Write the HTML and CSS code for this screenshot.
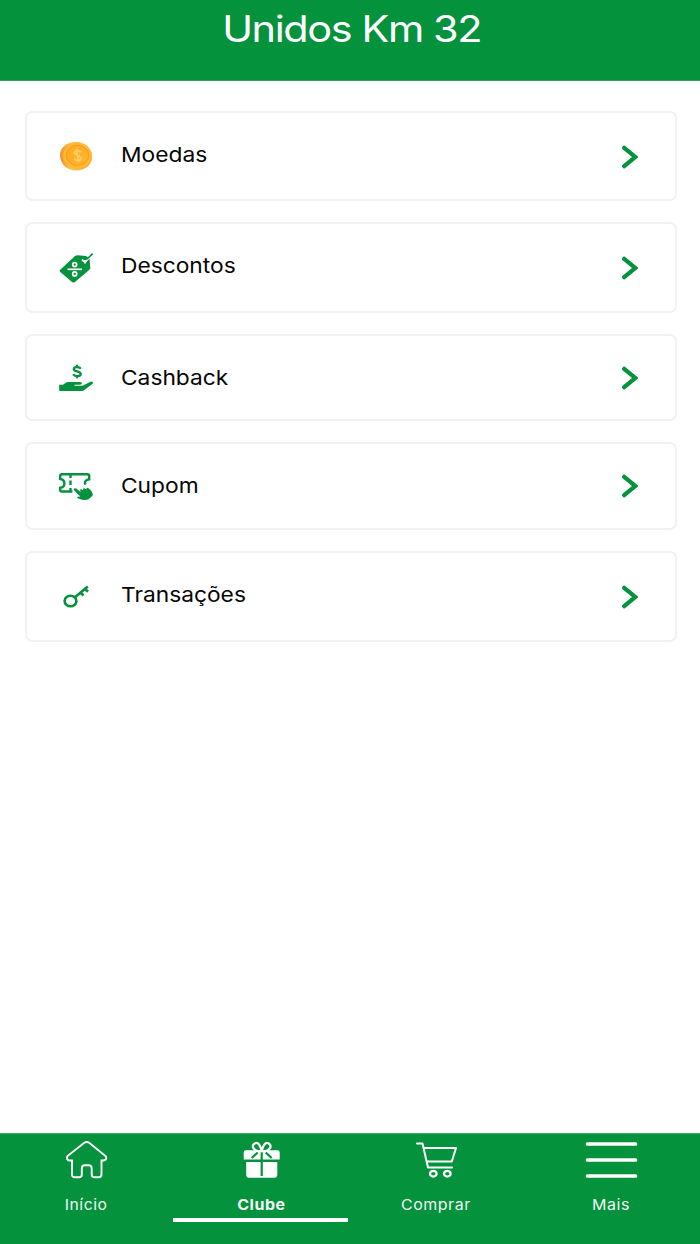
FILE: index.html
```html
<!DOCTYPE html>
<html lang="pt-BR">
<head>
<meta charset="utf-8">
<title>Unidos Km 32</title>
<link rel="stylesheet" href="styles.css">
</head>
<body>
<div class="app">
  <header class="header"><h1 class="title">Unidos Km 32</h1></header>
  <main class="list">
    <a class="card card-moedas">
      <svg class="icon" viewBox="55 137 42 40">
        <defs>
          <linearGradient id="edge" x1="0" x2="1"><stop offset="0" stop-color="#f0902c"/><stop offset=".35" stop-color="#ffc247"/><stop offset="1" stop-color="#fba62b"/></linearGradient>
          <linearGradient id="face" x1="0" x2="1" y1="0" y2="1"><stop offset="0" stop-color="#ffab22"/><stop offset="1" stop-color="#ffb52e"/></linearGradient>
        </defs>
        <path d="M60 155C60 148 66 142 76 142C85 142 92 149 92 157C92 165 85 170.500 76 170.500C67 170.500 60 164 60 155Z" fill="url(#edge)"/>
        <ellipse cx="77.500" cy="155.500" rx="14.300" ry="12.800" fill="#ffb932"/>
        <ellipse cx="77.500" cy="155.300" rx="11.300" ry="10" fill="url(#face)" stroke="#f89a1d" stroke-width="1"/>
        <path d="M80.800 152.300C79.500 150.500 74.500 150 74.500 152.700C74.500 155.800 81 154.700 81 158.200C81 161 76 161 74.300 158.700M76.500 148.600L78.700 162" fill="none" stroke="#ffcb64" stroke-width="1.800"/>
      </svg>
      <span class="label">Moedas</span>
      <svg class="chevron" viewBox="0 0 16 24"><path d="M2.200 2.800L13.200 12L2.200 21.200"/></svg>
    </a>
    <a class="card card-descontos">
      <svg class="icon" viewBox="55 248 42 40">
        <path d="M60 270L75 256Q76 255.300 77.500 255.300L86 256L89.500 258.500L90.300 267.500Q90.300 269 89.400 269.800L75 282Q73.500 283 72 282L60 271.800Q59 270.800 60 270Z" fill="#04923c"/>
        <path d="M82 259.800L85 262.300L92 254.500M85 263.500V260" fill="none" stroke="#fff" stroke-width="1.800"/>
        <path d="M86.500 259.500L92.700 253.700" stroke="#04923c" stroke-width="1.700"/>
        <g fill="none" stroke="#fff" stroke-width="1.700"><circle cx="74.700" cy="264.600" r="2"/><circle cx="74.700" cy="273.900" r="2"/><path d="M67.500 269.300H82"/></g>
      </svg>
      <span class="label">Descontos</span>
      <svg class="chevron" viewBox="0 0 16 24"><path d="M2.200 2.800L13.200 12L2.200 21.200"/></svg>
    </a>
    <a class="card card-cashback">
      <svg class="icon" viewBox="55 358 42 40">
        <path d="M80.800 368.800C79.500 366.500 73.800 366.500 73.800 369.200C73.800 372 80.700 370.800 80.700 374C80.700 377 74.500 376.700 73.200 374.300M77 364.800V367.500M77 375.500V378.300" fill="none" stroke="#04923c" stroke-width="2.300"/>
        <path d="M59.200 384.700H63L66.500 382.300Q67.300 381.900 68.500 381.900H80Q81.800 381.900 81.800 383.300Q81.800 384.500 80 384.700H74.500V385.800H81.500Q83 385.800 84.500 384.800L90 381.900Q92 381 92.900 382.200Q93.400 383.200 92 384.300L84.700 389.800Q83.300 391 81.300 391H60Q59.200 391 59.200 390.200Z" fill="#04923c"/>
      </svg>
      <span class="label">Cashback</span>
      <svg class="chevron" viewBox="0 0 16 24"><path d="M2.200 2.800L13.200 12L2.200 21.200"/></svg>
    </a>
    <a class="card card-cupom">
      <svg class="icon" viewBox="55 466 42 40">
        <g fill="none" stroke="#04923c" stroke-width="2.400">
          <path d="M85.800 484.500C83.800 482.500 85.500 480 89.200 479.300V475.800Q89.200 474.200 87.200 474.200H62Q60.200 474.200 60.200 475.800V479C65.800 479.800 65.800 487 60.200 487.700V490Q60.200 491.500 62 491.500H72.500"/>
          <path d="M70.500 474.500V478M70.500 480.500V485M70.500 488V491.500"/>
        </g>
        <path d="M73.900 488.700Q75 487.700 76.200 488.500L80.700 491.900L80 489.800Q80.800 488.600 82 489.600L83.200 490.600L83 488.800Q84.200 487.700 85.300 488.700L86.300 489.600L86.500 488.300Q87.500 487.200 88.500 488.200L91.500 491L92.800 494.300Q93 495.300 92.200 496L88.500 499.200Q86.500 500.300 82 499.700L77.500 498.300Q76.700 497.200 77.800 496.700L80.300 496.600L74 490.200Q73.300 489.400 73.900 488.700Z" fill="#04923c"/>
      </svg>
      <span class="label">Cupom</span>
      <svg class="chevron" viewBox="0 0 16 24"><path d="M2.200 2.800L13.200 12L2.200 21.200"/></svg>
    </a>
    <a class="card card-transacoes">
      <svg class="icon" viewBox="55 577 42 40">
        <g fill="none" stroke="#04923c" stroke-width="2.600"><ellipse cx="70.500" cy="601" rx="5.900" ry="5.200"/><path d="M75 597.300L87.800 586.500M84.500 588.500L88 591.700M80.300 592.500L83.500 595.500"/></g>
      </svg>
      <span class="label">Transações</span>
      <svg class="chevron" viewBox="0 0 16 24"><path d="M2.200 2.800L13.200 12L2.200 21.200"/></svg>
    </a>
  </main>
  <nav class="tabs">
    <a class="tab">
      <svg class="tab-icon" viewBox="0 0 60 44"><path d="M12.500 20.500H15.500V34.500Q15.500 37.300 18.500 37.300H22.500Q25.300 37.300 25.300 34.500V28.500Q25.300 25.300 28.500 25.300H32Q35.200 25.300 35.200 28.500V34.500Q35.200 37.300 38 37.300H42Q45 37.300 45 34.500V20.500H47Q51 19.500 49.300 16.300L33 3Q30.300 1 27.500 3L11 16Q9.500 19.500 12.500 20.500Z" transform="translate(-.500 0)" fill="none" stroke="#fff" stroke-width="1.900"/></svg>
      <span class="tab-label inicio">Início</span>
    </a>
    <a class="tab active">
      <svg class="tab-icon" viewBox="0 0 60 44"><g transform="translate(.700 0)">
        <path d="M14 10.200H46Q48 10.200 48 12.200V19.500H12V12.200Q12 10.200 14 10.200ZM14.500 22H45.600V34.700Q45.600 37.800 42.300 37.800H17.800Q14.500 37.800 14.500 34.700Z" fill="#fff"/>
        <path d="M30 12V36M26 12.500L20 18M34 12.500L40 18" stroke="#04923c" stroke-width="2.200"/>
        <path d="M30 11C28 3 25.500 2.500 23.500 3.200C20.500 4.500 20 8 24 10.200C26.500 11.200 28 11.500 30 11C32 11.500 33.500 11.200 36 10.200C40 8 39.500 4.500 36.500 3.200C34.500 2.500 32 3 30 11Z" fill="#04923c" stroke="#fff" stroke-width="2.200"/>
      </g></svg>
      <span class="tab-label clube">Clube</span>
    </a>
    <a class="tab">
      <svg class="tab-icon" viewBox="0 0 60 44"><g fill="none" stroke="#fff" stroke-width="2" stroke-linecap="round" stroke-linejoin="round"><path d="M11 3.500H16.500L22 27.500H46M17.700 8H50L45.800 21.500H20.700"/><ellipse cx="27.300" cy="33.700" rx="3.300" ry="2.900" stroke-width="2.300"/><ellipse cx="41.300" cy="33.700" rx="3.300" ry="2.900" stroke-width="2.300"/></g></svg>
      <span class="tab-label comprar">Comprar</span>
    </a>
    <a class="tab">
      <svg class="tab-icon" viewBox="0 0 60 44"><path d="M6 4H54M6 20H54M6 36H54" transform="translate(.500 0)" stroke="#fff" stroke-width="3.700" stroke-linecap="round"/></svg>
      <span class="tab-label mais">Mais</span>
    </a>
  </nav>
</div>
</body>
</html>
```
FILE: styles.css
```css
* { box-sizing: border-box; }
body { margin: 0; background: #fff; font-family: Inter, "Liberation Sans", sans-serif; }
.app { width: 700px; height: 1244px; display: flex; flex-direction: column; overflow: hidden; }
.header { height: 81px; background: #04923c; border-bottom: 1px solid #2fa45e; text-align: center; padding: 6px 0 0 3px; }
.title { display: inline-block; margin: 0; color: #fff; font-size: 37px; line-height: 45px; font-weight: 400; white-space: nowrap; letter-spacing: -1.250px; transform: scaleX(1.120); }
.list { flex: 1; display: flex; flex-direction: column; gap: 21px; padding: 30px 23px 0 25px; }
.card { display: flex; align-items: flex-start; border: 2px solid #f1f1f1; border-radius: 7px; padding: 0 37px 0 28px; }
.card-moedas { height: 90px; padding-top: 24px; }
.card-descontos { height: 91px; padding-top: 24px; }
.card-cashback { height: 87px; padding-top: 22px; }
.card-cupom { height: 88px; padding-top: 22px; }
.card-transacoes { height: 91px; padding-top: 24px; }
.icon { width: 42px; height: 40px; flex: none; }
.label { flex: 1; margin: 1px 0 0 23.500px; font-size: 20.500px; line-height: 34px; color: #050505; transform: scaleX(1.110); transform-origin: left; white-space: nowrap; }
.card-cashback .label, .card-cupom .label { margin-top: 3px; }
.chevron { width: 16px; height: 24px; margin-top: 7.500px; flex: none; fill: none; stroke: #04923c; stroke-width: 4.200px; stroke-linecap: round; }
.card-cashback .chevron { margin-top: 8px; }
.tabs { height: 111px; background: #04923c; border-top: 1px solid #41ac6c; display: flex; padding-right: 1px; }
.tab { width: 175px; height: 88px; padding-top: 6px; display: flex; flex-direction: column; align-items: center; color: #fff; }
.tab:first-child { width: 173px; }
.active { border-bottom: 4px solid #fff; }
.tab-icon { width: 60px; height: 44px; flex: none; }
.tab-label { font-size: 14.800px; line-height: 20px; margin-top: 11px; letter-spacing: .500px; transform: translateX(.500px) scaleX(1.080); opacity: .950; }
.inicio { transform: scaleX(1.060); }
.clube { font-weight: 700; transform: translateX(1px) scaleX(1.080); }
```
